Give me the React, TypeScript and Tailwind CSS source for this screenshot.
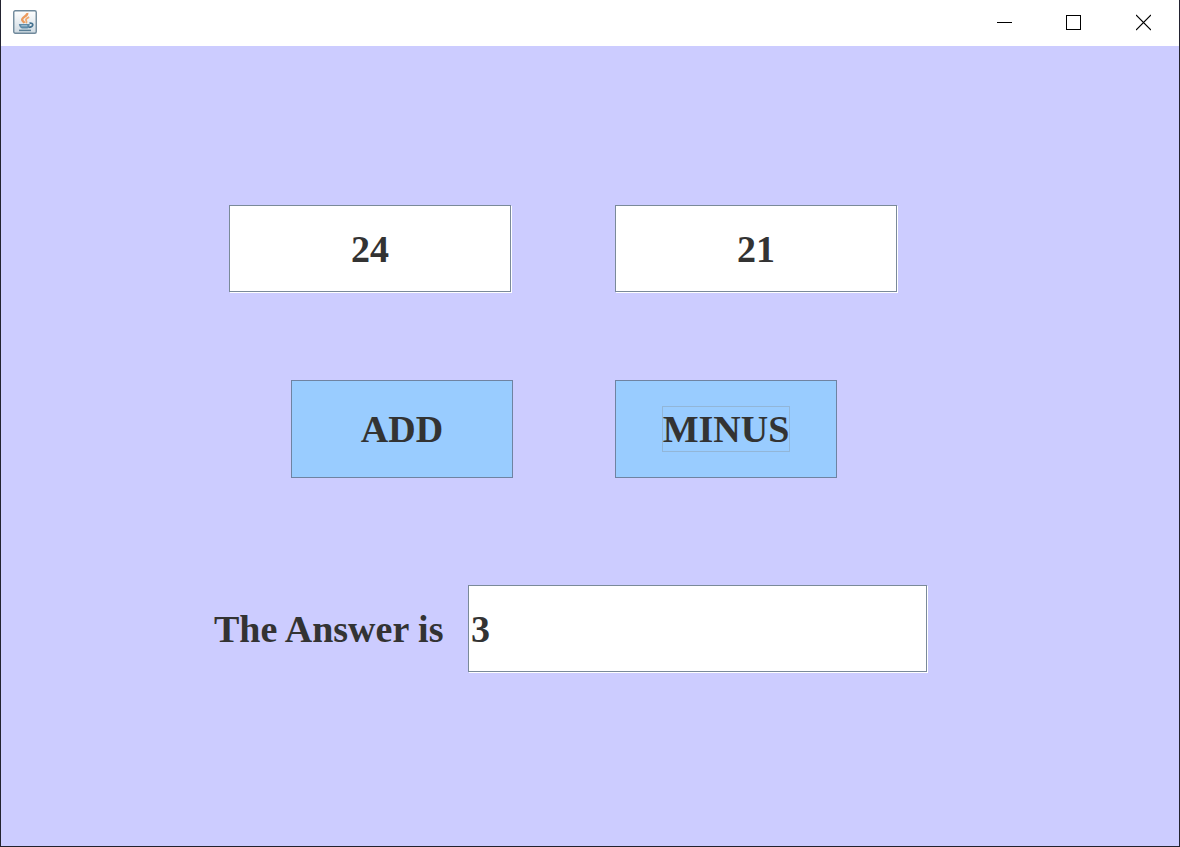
import { useState } from "react";

const fieldClass =
  "block h-[87px] rounded-none border border-[#7a8a99] bg-white text-[38px] leading-[44px] font-bold text-[#333333] shadow-[1px_1px_0_#ffffff] outline-none";

const buttonClass =
  "flex h-[98px] w-[222px] items-center justify-center border border-[#6f83a2] bg-[#99ccff] text-[38px] leading-[44px] font-bold text-[#333333] outline-none";

function JavaIcon() {
  return (
    <svg width="24" height="24" viewBox="0 0 24 24" fill="none" aria-hidden="true">
      <defs>
        <linearGradient id="tile" x1="0" y1="0" x2="0" y2="1">
          <stop offset="0" stopColor="#ffffff" />
          <stop offset="1" stopColor="#cfdae2" />
        </linearGradient>
      </defs>
      <rect x="0.75" y="0.75" width="22.5" height="22.5" rx="1.5" fill="url(#tile)" stroke="#70899b" strokeWidth="1.4" />
      <path d="M14.2 3C15 6 8.400 7.200 9.200 10c.3 1.200 1.700 2 2.200 3" stroke="#ec9a5c" strokeWidth="2.400" />
      <path d="M16.200 7.200c-2.600 1-4 2.200-3 3.600.7 1 .6 1.600-.2 2.400" stroke="#f0a86e" strokeWidth="1.800" />
      <path d="M5.800 14h11c-.3 2.600-1.200 4.100-2.300 4.600H9c-1.500-.6-2.800-2.200-3.200-4.600Z" fill="#5f8ba8" />
      <path d="M8.300 15.800h6" stroke="#c7dce8" strokeWidth="0.8" />
      <path d="M16.500 13.200c4.600-.8 4.500 3.800-1 4.200" stroke="#44718f" strokeWidth="1.700" />
      <path d="M6 20.400h12" stroke="#5a7f96" strokeWidth="1.500" />
    </svg>
  );
}

function TitleBar() {
  return (
    <header className="flex h-[46px] items-center justify-between bg-white pl-3">
      <div className="flex pb-0.5">
        <JavaIcon />
      </div>
      <div className="flex h-full text-black">
        <button type="button" aria-label="Minimize" className="flex w-[69px] items-center justify-center">
          <svg width="15" height="46" viewBox="0 0 15 46" shapeRendering="crispEdges" aria-hidden="true">
            <path d="M0 22.500h15" stroke="currentColor" />
          </svg>
        </button>
        <button type="button" aria-label="Maximize" className="flex w-[69px] items-center justify-center">
          <svg width="15" height="46" viewBox="0 0 15 46" fill="none" shapeRendering="crispEdges" aria-hidden="true">
            <rect x="0.5" y="15.500" width="14" height="14" stroke="currentColor" />
          </svg>
        </button>
        <button type="button" aria-label="Close" className="flex w-[71px] items-center justify-center">
          <svg width="15" height="46" viewBox="0 0 15 46" aria-hidden="true">
            <path d="M0 15l15 15M15 15L0 30" stroke="currentColor" strokeWidth="1.200" />
          </svg>
        </button>
      </div>
    </header>
  );
}

export default function App() {
  const [first, setFirst] = useState("24");
  const [second, setSecond] = useState("21");
  const [answer, setAnswer] = useState("3");

  return (
    <div className="flex min-h-screen flex-col border-x border-b border-[#22222f] bg-[#ccccff] font-['Liberation_Serif',serif]">
      <TitleBar />
      <main className="flex flex-1 flex-col items-center pt-[159px] pr-[38px]">
        <form className="w-[714px]" onSubmit={(e) => e.preventDefault()}>
          <div className="grid grid-cols-[299px_1fr] gap-x-[102px] gap-y-[88px]">
            <div className="justify-self-end pr-0.5">
              <input
                aria-label="First number"
                className={`${fieldClass} w-[282px] text-center`}
                value={first}
                onChange={(e) => setFirst(e.target.value)}
              />
            </div>
            <input
              aria-label="Second number"
              className={`${fieldClass} w-[282px] text-center`}
              value={second}
              onChange={(e) => setSecond(e.target.value)}
            />
            <button
              type="button"
              className={`${buttonClass} justify-self-end`}
              onClick={() => setAnswer(String(Number(first) + Number(second)))}
            >
              ADD
            </button>
            <button
              type="button"
              className={buttonClass}
              onClick={() => setAnswer(String(Number(first) - Number(second)))}
            >
              <span className="border border-[#92b6d8]">MINUS</span>
            </button>
          </div>
          <div className="mt-[107px] flex items-center justify-between pr-px">
            <label htmlFor="answer" className="text-[38px] leading-[44px] font-bold whitespace-nowrap text-[#333333]">
              The Answer is
            </label>
            <input
              id="answer"
              className={`${fieldClass} w-[459px] px-0.5`}
              value={answer}
              onChange={(e) => setAnswer(e.target.value)}
            />
          </div>
        </form>
      </main>
    </div>
  );
}
